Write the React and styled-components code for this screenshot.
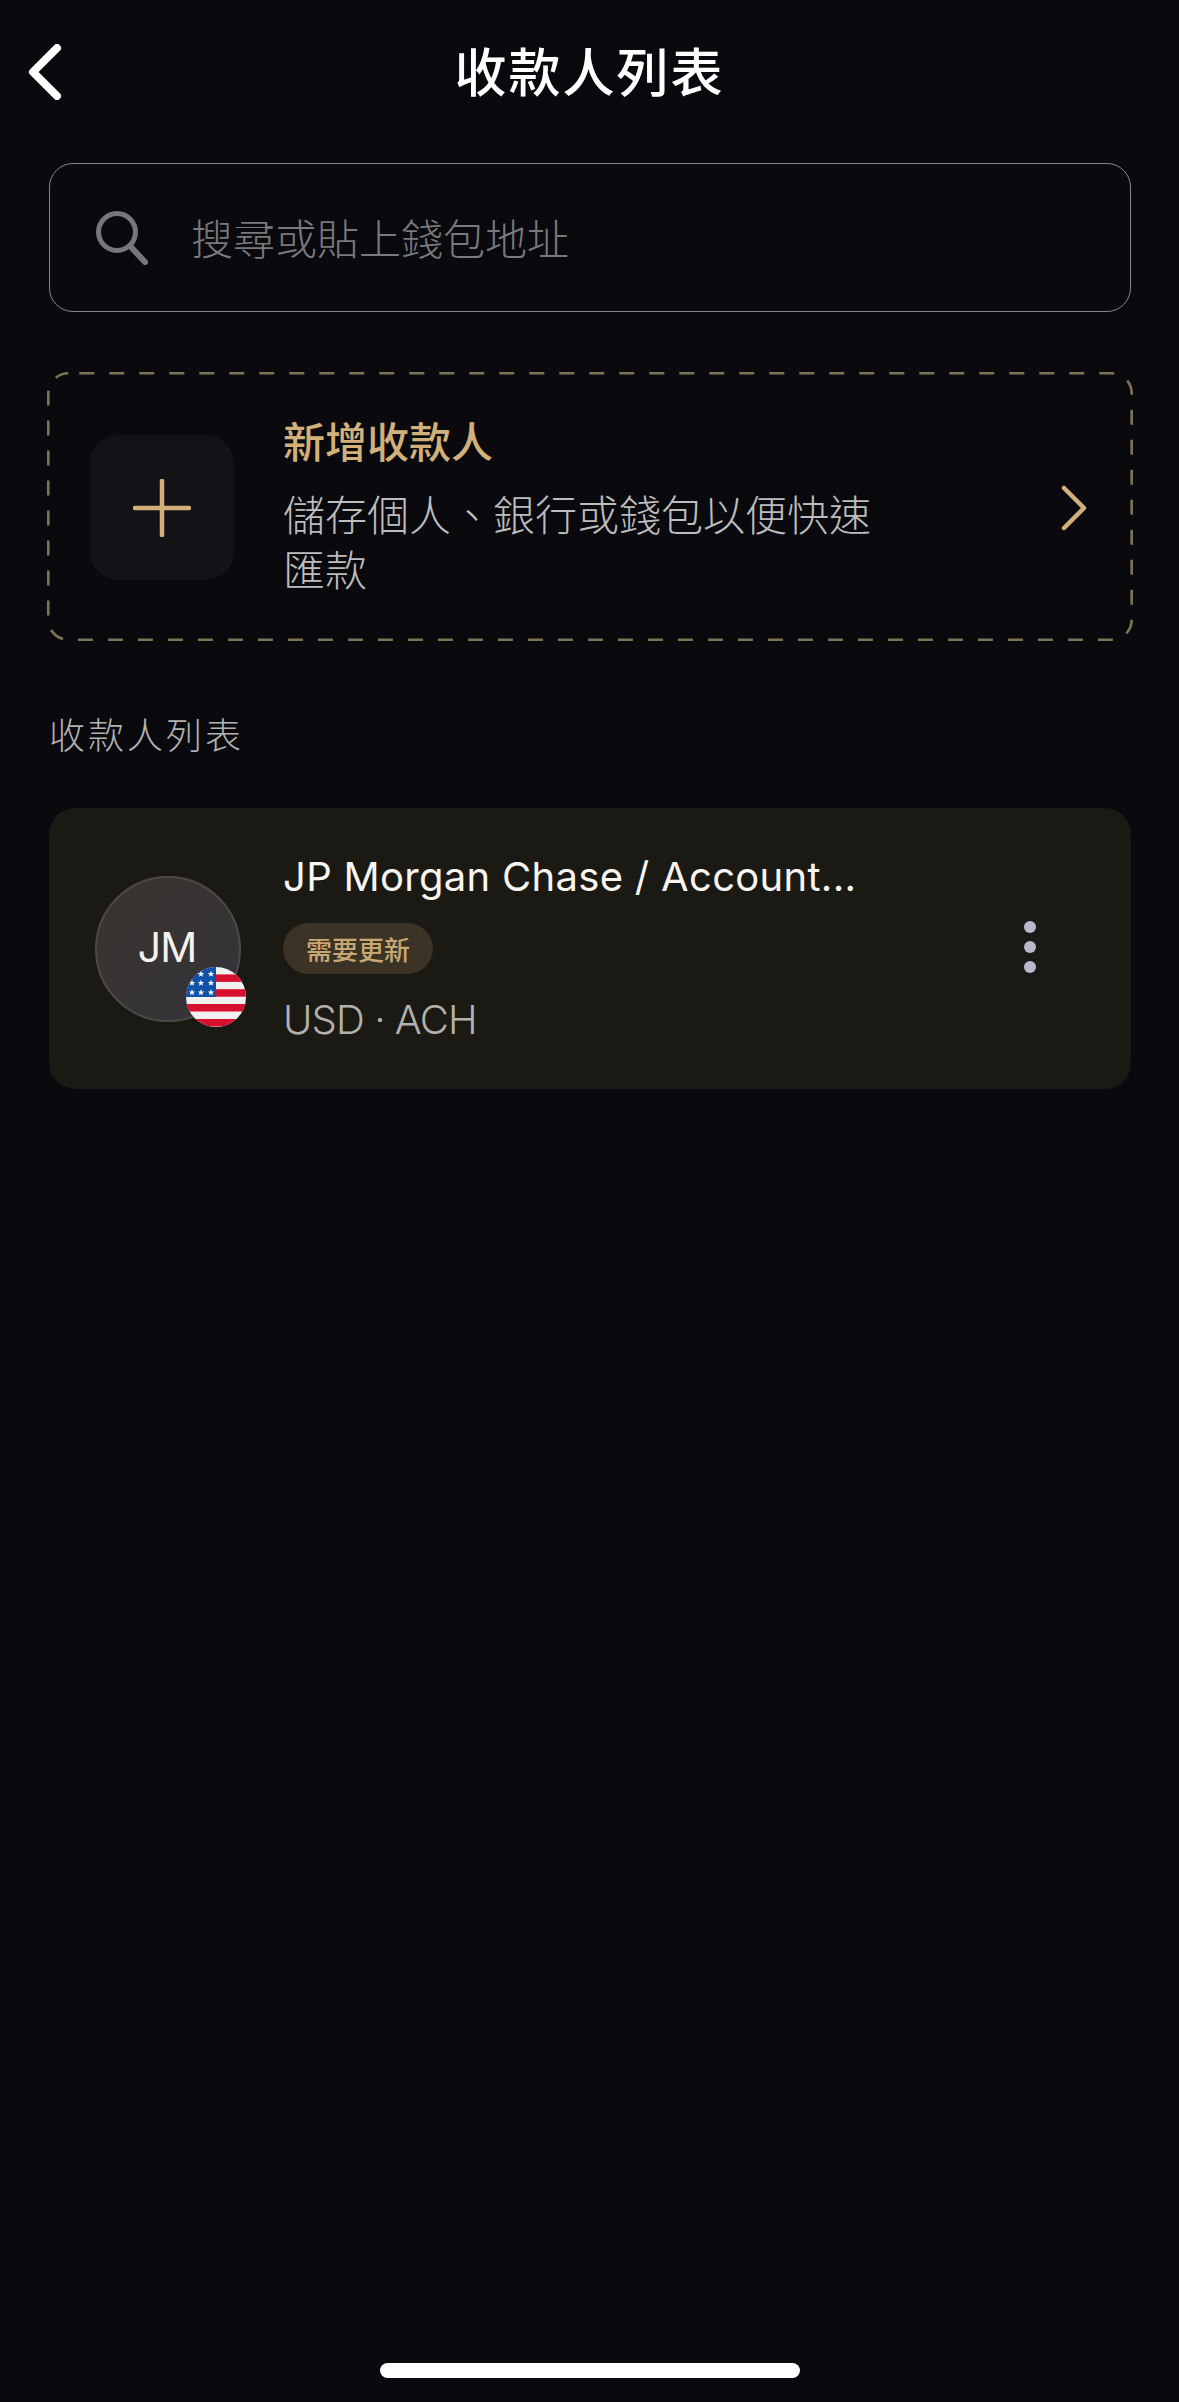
import styled, { createGlobalStyle } from "styled-components";

const GlobalStyle = createGlobalStyle`
  * {
    box-sizing: border-box;
  }
  html,
  body {
    margin: 0;
    padding: 0;
    background: #09090e;
  }
  body {
    font-family: "Inter", "Noto Sans CJK TC", sans-serif;
  }
`;

const cjk = `"Noto Sans CJK TC", "Noto Sans", sans-serif`;
const gold = "#d2b07a";

function App() {
  return (
    <Page>
      <GlobalStyle />
      <Header>
        <BackButton type="button" aria-label="back">
          <svg width="34" height="56" viewBox="0 0 34 56" fill="none">
            <path
              d="M29 4 L5 28 L29 52"
              stroke="#fff"
              strokeWidth="8"
              strokeLinecap="round"
              strokeLinejoin="round"
            />
          </svg>
        </BackButton>
        <Title>收款人列表</Title>
      </Header>

      <Content>
        <SearchBar>
          <svg width="52" height="54" viewBox="0 0 52 54" fill="none">
            <circle cx="21" cy="21" r="18.5" stroke="#77777a" strokeWidth="5" />
            <path
              d="M34 35 L49 51"
              stroke="#77777a"
              strokeWidth="6"
              strokeLinecap="round"
            />
          </svg>
          <SearchInput placeholder="搜尋或貼上錢包地址" />
        </SearchBar>

        <AddCard>
          <DashedEdge viewBox="0 0 1086 269" fill="none">
            <rect
              x="1.3"
              y="1.3"
              width="1083.4"
              height="266.4"
              rx="20"
              stroke="#7d7456"
              strokeWidth="2.6"
              strokeDasharray="15 15"
              strokeDashoffset="-11"
            />
          </DashedEdge>
          <PlusBox>
            <svg width="58" height="58" viewBox="0 0 58 58" fill="none">
              <path
                d="M29 2 V56 M2 29 H56"
                stroke={gold}
                strokeWidth="4.5"
                strokeLinecap="round"
              />
            </svg>
          </PlusBox>
          <AddText>
            <AddTitle>新增收款人</AddTitle>
            <AddDesc>儲存個人、銀行或錢包以便快速匯款</AddDesc>
          </AddText>
          <AddChevron width="26" height="46" viewBox="0 0 26 46" fill="none">
            <path
              d="M3 3 L23 23 L3 43"
              stroke={gold}
              strokeWidth="4.5"
              strokeLinecap="round"
              strokeLinejoin="round"
            />
          </AddChevron>
        </AddCard>

        <SectionLabel>收款人列表</SectionLabel>

        <PayeeCard>
          <Avatar>
            JM
            <FlagBadge width="60" height="60" viewBox="0 0 60 60">
              <defs>
                <clipPath id="flagClip">
                  <circle cx="30" cy="30" r="30" />
                </clipPath>
              </defs>
              <g clipPath="url(#flagClip)">
                <rect width="60" height="60" fill="#f0f0f0" />
                {[7.4, 22.2, 37, 52].map((y) => (
                  <rect key={y} y={y} width="60" height="7.5" fill="#d8102f" />
                ))}
                <rect width="30" height="30" fill="#0f52a8" />
                {[
                  [15, 7],
                  [25, 7],
                  [6, 16],
                  [15, 16],
                  [25, 16],
                  [6, 25.5],
                  [15, 25.5],
                  [25, 25.5],
                ].map(([x, y]) => (
                  <polygon
                    key={`${x}-${y}`}
                    transform={`translate(${x} ${y})`}
                    fill="#f4f4f4"
                    points="0,-3.4 0.9,-1.1 3.3,-1 1.4,0.5 2,2.8 0,1.5 -2,2.8 -1.4,0.5 -3.3,-1 -0.9,-1.1"
                  />
                ))}
              </g>
            </FlagBadge>
          </Avatar>
          <PayeeText>
            <PayeeName>JP Morgan Chase / Account...</PayeeName>
            <Badge>需要更新</Badge>
            <PayeeMeta>USD · ACH</PayeeMeta>
          </PayeeText>
          <MoreDots>
            <span />
            <span />
            <span />
          </MoreDots>
        </PayeeCard>
      </Content>

      <HomeBar />
    </Page>
  );
}

const Page = styled.div`
  width: 1179px;
  min-height: 2402px;
  background: #09090e;
  display: flex;
  flex-direction: column;
`;

const Header = styled.header`
  position: relative;
  height: 140px;
  display: flex;
  align-items: center;
  justify-content: center;
`;

const BackButton = styled.button`
  position: absolute;
  left: 28px;
  top: 44px;
  padding: 0;
  border: 0;
  background: none;
  display: flex;
`;

const Title = styled.h1`
  margin: 0;
  font-family: ${cjk};
  font-size: 52px;
  line-height: 60px;
  font-weight: 500;
  letter-spacing: 2px;
  color: #fff;
`;

const Content = styled.main`
  padding: 23px 48px 0 49px;
  display: flex;
  flex-direction: column;
`;

const SearchBar = styled.div`
  height: 149px;
  padding-left: 46px;
  border: 1.5px solid #85858a;
  border-radius: 24px;
  display: flex;
  align-items: center;
  gap: 43px;
`;

const SearchInput = styled.input`
  flex: 1;
  min-width: 0;
  border: 0;
  outline: 0;
  padding: 0;
  margin-top: -3px;
  background: transparent;
  font-family: ${cjk};
  font-size: 42px;
  font-weight: 300;
  color: #fff;

  &::placeholder {
    color: #7a7a7d;
    opacity: 1;
  }
`;

const AddCard = styled.section`
  position: relative;
  margin: 60px -2px 0 -2px;
  height: 269px;
  padding: 2px 46px 0 43px;
  display: flex;
  align-items: center;
  gap: 50px;
`;

const DashedEdge = styled.svg`
  position: absolute;
  inset: 0;
  width: 100%;
  height: 100%;
`;

const PlusBox = styled.div`
  flex: none;
  width: 144px;
  height: 145px;
  border-radius: 28px;
  background: #131317;
  display: flex;
  align-items: center;
  justify-content: center;
`;

const AddText = styled.div`
  width: 600px;
  margin: 0 0 8px -1px;
  display: flex;
  flex-direction: column;
  gap: 17px;
  font-family: ${cjk};
`;

const AddTitle = styled.div`
  font-size: 42px;
  line-height: 56px;
  font-weight: 500;
  color: ${gold};
`;

const AddDesc = styled.div`
  font-size: 42px;
  line-height: 55px;
  font-weight: 300;
  color: #bdbdbd;
`;

const AddChevron = styled.svg`
  flex: none;
  margin-left: auto;
`;

const SectionLabel = styled.h2`
  margin: 67px 0 3px;
  font-family: ${cjk};
  font-size: 36px;
  line-height: 50px;
  font-weight: 300;
  letter-spacing: 3px;
  color: #b2b2b2;
`;

const PayeeCard = styled.section`
  margin-top: 47px;
  height: 281px;
  padding: 0 95px 0 46px;
  border-radius: 26px;
  background: #1b1914;
  display: flex;
  align-items: center;
  gap: 42px;
`;

const Avatar = styled.div`
  position: relative;
  flex: none;
  width: 146px;
  height: 146px;
  border-radius: 50%;
  border: 2px solid #4c4947;
  background: linear-gradient(135deg, #3a342e 0%, #34333a 100%);
  display: flex;
  align-items: center;
  justify-content: center;
  padding: 0 2px 3px 0;
  font-size: 41px;
  letter-spacing: -1px;
  color: #f4f2ee;
`;

const FlagBadge = styled.svg`
  position: absolute;
  right: -7px;
  bottom: -7px;
`;

const PayeeText = styled.div`
  display: flex;
  flex-direction: column;
  align-items: flex-start;
  gap: 20px;
`;

const PayeeName = styled.div`
  font-size: 40px;
  line-height: 52px;
  letter-spacing: 0.3px;
  color: #f7f5f0;
  white-space: nowrap;
`;

const Badge = styled.span`
  height: 51px;
  width: 150px;
  border-radius: 26px;
  background: #3c3327;
  display: flex;
  align-items: center;
  justify-content: center;
  font-family: ${cjk};
  font-size: 26px;
  font-weight: 500;
  color: #c8a872;
`;

const PayeeMeta = styled.div`
  font-size: 40px;
  line-height: 52px;
  font-weight: 300;
  letter-spacing: -0.9px;
  color: #b3b1ac;
`;

const MoreDots = styled.div`
  margin: 0 0 3px auto;
  display: flex;
  flex-direction: column;
  gap: 8px;

  span {
    width: 12px;
    height: 12px;
    border-radius: 50%;
    background: #b9b7cc;
  }
`;

const HomeBar = styled.div`
  align-self: center;
  flex: none;
  margin-top: auto;
  margin-bottom: 24px;
  width: 420px;
  height: 15px;
  border-radius: 8px;
  background: #fff;
`;

export default App;
